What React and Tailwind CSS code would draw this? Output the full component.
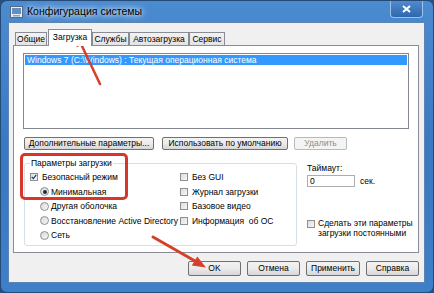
import React from 'react';

const font = { fontFamily: '"Liberation Sans", Arial, sans-serif' };

const CheckBox = ({ checked = false }) => (
  <span className="flex items-center justify-center w-[8px] h-[8px] shrink-0 border border-[#8e8f8f] bg-gradient-to-br from-[#dcdcdc] to-[#f8f8f8]">
    {checked && (
      <svg width="8" height="8" viewBox="0 0 8 8">
        <path d="M1 4 L3.2 6.2 L7 1.2" fill="none" stroke="#1f3f73" strokeWidth="1.6" />
      </svg>
    )}
  </span>
);

const Radio = ({ checked = false }) => (
  <span className="flex items-center justify-center w-[9px] h-[9px] shrink-0 rounded-full border border-[#8e8f8f] bg-gradient-to-br from-[#d8d8d8] to-[#f8f8f8]">
    {checked && <span className="w-[4px] h-[4px] rounded-full bg-[#1b2b44]" />}
  </span>
);

const Button = ({ children, width, height = 'h-[13px]', disabled = false }) => (
  <div
    className={`${width} ${height} flex items-center justify-center whitespace-nowrap rounded-[2px] border text-[8.5px] leading-none ${
      disabled
        ? 'border-[#b6babd] bg-[#f4f4f4] text-[#8d8d8d]'
        : 'border-[#707070] bg-gradient-to-b from-[#f3f3f3] via-[#ebebeb] to-[#d6d6d6] text-black'
    }`}
  >
    {children}
  </div>
);

const Tab = ({ label, width, active = false }) => (
  <div
    className={`${width} flex items-center justify-center whitespace-nowrap text-[8.5px] leading-none border border-[#898c95] ${
      active
        ? 'h-[17px] -mb-px relative z-10 bg-white border-b-0 pb-[2px]'
        : 'h-[13px] bg-gradient-to-b from-[#f2f2f2] to-[#e3e3e3] border-b-0'
    }`}
  >
    {label}
  </div>
);

const Row = ({ children, className = '' }) => (
  <div className={`h-[14.5px] flex items-center whitespace-nowrap text-[8.5px] leading-none ${className}`}>{children}</div>
);

export default function App() {
  return (
    <div style={font} className="relative w-[434px] h-[293px] overflow-hidden bg-[#2a4f7c]">
      <div className="h-full rounded-[7px] border border-[#244a78] bg-gradient-to-b from-[#4b8bd0] via-[#3a78c0] to-[#3d7fc8] flex flex-col">
        {/* Title bar */}
        <div className="h-[21px] flex items-center shrink-0">
          <svg className="ml-[9px]" width="13" height="12" viewBox="0 0 13 12">
            <rect x="0.5" y="0.5" width="12" height="11" fill="#e8eef5" stroke="#5a6a7e" />
            <rect x="2" y="2" width="9" height="6" fill="#5f8fc4" />
            <rect x="3" y="9" width="7" height="1.5" fill="#8ea2b8" />
          </svg>
          <span className="ml-[4px] text-[10.5px] text-black [text-shadow:0_0_5px_#fff,0_0_8px_#e6f0ff]">
            Конфигурация системы
          </span>
          <div className="ml-auto mr-[10px] self-start w-[33px] h-[17px] rounded-b-[4px] border border-t-0 border-[#9cc0e8] bg-gradient-to-b from-[#4f8ccf] to-[#2f67ab] flex items-center justify-center">
            <svg width="9" height="8" viewBox="0 0 9 8">
              <path d="M1 1 L8 7 M8 1 L1 7" stroke="#fff" strokeWidth="2" />
            </svg>
          </div>
        </div>

        {/* Client area */}
        <div className="ml-[7px] mr-[8px] h-[261px] bg-[#f0f0f0] border border-[#5d84b2] flex flex-col">
          <div className="mt-[6px] ml-[6px] h-[16px] flex items-end">
            <Tab label="Общие" width="w-[32px]" />
            <div className="w-[1px]" />
            <Tab label="Загрузка" width="w-[44px]" active />
            <Tab label="Службы" width="w-[37px]" />
            <Tab label="Автозагрузка" width="w-[60px]" />
            <Tab label="Сервис" width="w-[36px]" />
          </div>

          {/* Tab panel */}
          <div className="ml-[4px] w-[406px] h-[208px] border border-[#898c95] bg-white flex flex-col">
            <div className="ml-[9px] mt-[7px] w-[386px] h-[76px] border border-[#828790] bg-white p-px">
              <div className="h-[10px] bg-[#3399ff] text-white text-[8.5px] leading-[10px] pl-[2px] whitespace-nowrap">
                Windows 7 (C:\Windows) : Текущая операционная система
              </div>
            </div>

            <div className="ml-[10px] mt-[8px] flex">
              <Button width="w-[130px]">Дополнительные параметры...</Button>
              <div className="w-[8px]" />
              <Button width="w-[126px]">Использовать по умолчанию</Button>
              <div className="w-[6px]" />
              <Button width="w-[53px]" disabled>Удалить</Button>
            </div>

            <div className="ml-[10px] mt-[8px] flex items-start">
              <fieldset className="w-[273px] shrink-0 border border-[#d5dfe5] rounded-[3px] pl-[5px] pb-[2px] pt-[2px] flex">
                <legend className="px-[1px] text-[8.5px] leading-[10px] whitespace-nowrap">Параметры загрузки</legend>
                <div className="w-[150px] shrink-0">
                  <Row className="gap-[4px]">
                    <CheckBox checked />
                    <span>Безопасный режим</span>
                  </Row>
                  <Row className="pl-[10px] gap-[2px]">
                    <Radio checked />
                    <span>Минимальная</span>
                  </Row>
                  <Row className="pl-[10px] gap-[2px]">
                    <Radio />
                    <span>Другая оболочка</span>
                  </Row>
                  <Row className="pl-[10px] gap-[2px]">
                    <Radio />
                    <span>Восстановление Active Directory</span>
                  </Row>
                  <Row className="pl-[10px] gap-[2px]">
                    <Radio />
                    <span>Сеть</span>
                  </Row>
                </div>
                <div>
                  <Row className="gap-[4px]">
                    <CheckBox />
                    <span>Без GUI</span>
                  </Row>
                  <Row className="gap-[4px]">
                    <CheckBox />
                    <span>Журнал загрузки</span>
                  </Row>
                  <Row className="gap-[4px]">
                    <CheckBox />
                    <span>Базовое видео</span>
                  </Row>
                  <Row className="gap-[4px]">
                    <CheckBox />
                    <span className="whitespace-pre">Информация  об ОС</span>
                  </Row>
                </div>
              </fieldset>

              <div className="ml-[10px] flex flex-col whitespace-nowrap text-[8.5px] leading-[10px]">
                <div className="mt-[5px]">Таймаут:</div>
                <div className="mt-[2px] flex items-center">
                  <div className="w-[48px] h-[12px] border border-[#abadb3] bg-white pl-[2px] leading-[10px]">0</div>
                  <span className="ml-[5px]">сек.</span>
                </div>
                <div className="mt-[31px] flex items-start gap-[3px]">
                  <span className="mt-[2px]">
                    <CheckBox />
                  </span>
                  <span className="leading-[10px]">
                    Сделать эти параметры
                    <br />
                    загрузки постоянными
                  </span>
                </div>
              </div>
            </div>
          </div>

          <div className="mt-[8px] mr-[5px] flex justify-end gap-[6px]">
            <Button width="w-[53px]" height="h-[15px]">OK</Button>
            <Button width="w-[53px]" height="h-[15px]">Отмена</Button>
            <Button width="w-[54px]" height="h-[15px]">Применить</Button>
            <Button width="w-[53px]" height="h-[15px]">Справка</Button>
          </div>
        </div>
      </div>

      {/* Red highlight */}
      <div className="absolute left-[20px] top-[153px] w-[108px] h-[47px] border-[3px] border-[#d8352b] rounded-[5px]" />

      {/* Red arrows */}
      <svg className="absolute inset-0 pointer-events-none" width="434" height="293" viewBox="0 0 434 293">
        <path d="M100 84 L81.5 45" stroke="#d5402b" strokeWidth="2.5" strokeLinecap="round" />
        <polygon points="76,34 86,42.7 76.7,47.3" fill="#d5402b" />
        <path d="M153 237 L195 261" stroke="#d5402b" strokeWidth="3" strokeLinecap="round" />
        <polygon points="206,267.5 191.8,265.6 197.3,256.4" fill="#d5402b" />
      </svg>
    </div>
  );
}
